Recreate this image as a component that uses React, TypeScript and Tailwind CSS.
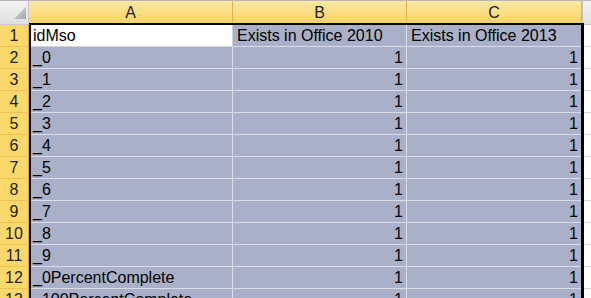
const data: [string, string, string][] = [
  ['idMso', 'Exists in Office 2010', 'Exists in Office 2013'],
  ['_0', '1', '1'],
  ['_1', '1', '1'],
  ['_2', '1', '1'],
  ['_3', '1', '1'],
  ['_4', '1', '1'],
  ['_5', '1', '1'],
  ['_6', '1', '1'],
  ['_7', '1', '1'],
  ['_8', '1', '1'],
  ['_9', '1', '1'],
  ['_0PercentComplete', '1', '1'],
  ['_100PercentComplete', '1', '1'],
];

function ColHeader({ label }: { label: string }) {
  return (
    <div className="flex h-[24px] items-center justify-center border-r border-b border-r-[#e0b24c] border-b-[#eea53a] bg-gradient-to-b from-[#fde9a4] to-[#f9d25e] text-[#222]">
      {label}
    </div>
  );
}

function Cell({ children, white, right }: { children?: React.ReactNode; white?: boolean; right?: boolean }) {
  return (
    <div
      className={
        'flex h-[22px] items-center overflow-hidden whitespace-nowrap border-r border-b pt-[1px] ' +
        (white ? 'bg-white border-[#d4d4d4] ' : 'bg-[#a9b0c8] border-[#dadde6] ') +
        (right ? 'justify-end pr-[3px]' : 'justify-start pl-[4px]')
      }
    >
      {children}
    </div>
  );
}

export default function App() {
  return (
    <div
      className="relative h-[298px] w-[591px] overflow-hidden bg-white text-[16px] leading-none text-black"
      style={{ fontFamily: '"Liberation Sans", Arial, sans-serif' }}
    >
      <div className="grid grid-cols-[29px_204px_174px_175px_1fr] border-t border-[#b8b8b8]">
        {/* corner */}
        <div className="relative h-[24px] border-r border-b border-[#c8c8c8] bg-gradient-to-b from-[#f4f4f4] to-[#dedede]">
          <svg className="absolute left-[14px] top-[6px]" width="12" height="12" viewBox="0 0 12 12">
            <defs>
              <linearGradient id="tri" x1="0" y1="0" x2="1" y2="1">
                <stop offset="0" stopColor="#d4d4d4" />
                <stop offset="1" stopColor="#a8a8a8" />
              </linearGradient>
            </defs>
            <polygon points="12,0 12,12 0,12" fill="url(#tri)" />
          </svg>
        </div>
        <ColHeader label="A" />
        <ColHeader label="B" />
        <ColHeader label="C" />
        <div className="h-[24px] border-b border-l border-[#c8c8c8] bg-gradient-to-b from-[#f2f2f2] to-[#e2e2e2]" />

        {data.map(([a, b, c], i) => (
          <div key={i} className="contents">
            <div className="flex h-[22px] items-center justify-center border-r border-b border-r-[#e2a53c] border-b-[#eebf5a] bg-[#fbd86a] pt-[1px] text-[#222]">
              {i + 1}
            </div>
            <Cell white={i === 0}>{a}</Cell>
            <Cell right={i > 0}>{b}</Cell>
            <Cell right={i > 0}>{c}</Cell>
            <div className="h-[22px] border-b border-[#d8d8d8] bg-white" />
          </div>
        ))}
      </div>

      {/* selection outline */}
      <div className="pointer-events-none absolute left-[29px] top-[23px] h-[300px] w-[555px] border-2 border-r-[3px] border-black" />
    </div>
  );
}
